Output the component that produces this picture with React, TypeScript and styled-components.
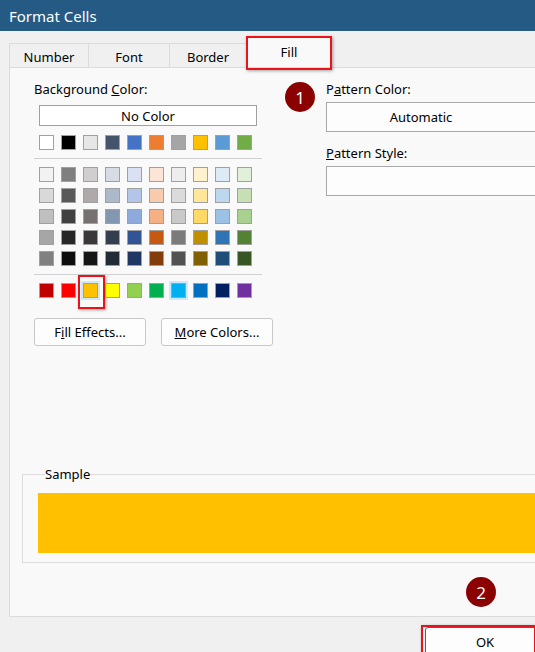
import React from "react";
import styled, { createGlobalStyle } from "styled-components";

const Global = createGlobalStyle`
  html, body { margin: 0; padding: 0; background: #f0f0f0; overflow: hidden; }
  body { font-family: "Segoe UI", "Noto Sans", "Open Sans", sans-serif; font-size: 13px; color: #000; }
`;

const Window = styled.div`width: 535px; height: 652px; position: relative; overflow: hidden; background: #f0f0f0;`;
const TitleBar = styled.div`height: 31px; background: #245a83; color: #fff; font-size: 15px; display: flex; align-items: center; padding-left: 9px;`;
const Tabs = styled.div`display: flex; align-items: flex-end; height: 36px; padding-left: 10px;`;
const Tab = styled.div<{ $w: number; $active?: boolean }>`
  width: ${p => p.$w}px; height: ${p => (p.$active ? 31 : 24)}px; box-sizing: border-box;
  display: flex; align-items: center; justify-content: center; position: relative;
  background: ${p => (p.$active ? "#f9f9f9" : "#f0f0f0")};
  border: 1px solid #dcdcdc; border-bottom: none; margin-left: -1px;
  padding-top: ${p => (p.$active ? 0 : 2)}px;
`;
const RedBox = styled.div<{ $t: number; $l: number; $r: number; $b: number }>`
  position: absolute; top: ${p => p.$t}px; left: ${p => p.$l}px; right: ${p => p.$r}px; bottom: ${p => p.$b}px;
  border: 2px solid #e8141a; box-shadow: 1px 1px 3px rgba(0,0,0,0.35); pointer-events: none;
`;
const Panel = styled.div`
  margin-left: 9px; width: 560px; height: 550px; box-sizing: border-box;
  background: #f9f9f9; border: 1px solid #dcdcdc; display: flex; flex-direction: column;
`;
const Top = styled.div`display: flex; height: 398px;`;
const LeftCol = styled.div`width: 316px; padding: 13px 0 0 24px; box-sizing: border-box;`;
const RightCol = styled.div`padding: 13px 0 0 0; flex: 1;`;
const Label = styled.div`height: 17px; line-height: 17px;`;
const U = styled.span`text-decoration: underline;`;
const NoColor = styled.div`
  margin: 7px 0 0 5px; width: 218px; height: 21px; box-sizing: border-box; border: 1px solid #a0a0a0;
  background: #fff; display: flex; align-items: center; justify-content: center;
`;
const SwatchRow = styled.div<{ $mt: number }>`display: grid; grid-template-columns: repeat(10, 15px); column-gap: 7px; row-gap: 6px; margin: ${p => p.$mt}px 0 0 5px;`;
const Swatch = styled.div<{ $c: string; $glow?: boolean }>`
  width: 15px; height: 15px; box-sizing: border-box; border: 1px solid #a0a0a0; background: ${p => p.$c}; position: relative;
  box-shadow: ${p => (p.$glow ? "0 0 0 2px #cce8ff" : "none")};
`;
const Sep = styled.div<{ $mt: number }>`height: 1px; width: 228px; background: #d0d0d0; margin-top: ${p => p.$mt}px;`;
const BtnRow = styled.div`display: flex; gap: 15px; margin-top: 20px;`;
const Button = styled.div`
  width: 112px; height: 28px; box-sizing: border-box; border: 1px solid #c8c8c8; border-radius: 3px;
  background: #fdfdfd; display: flex; align-items: center; justify-content: center;
`;
const Field = styled.div<{ $h: number }>`
  margin: 4px 0 0; height: ${p => p.$h}px; box-sizing: border-box; border: 1px solid #a8a8a8; background: #fdfdfd;
  display: flex; align-items: center; justify-content: center; width: 240px; padding-right: 50px;
`;
const StyleLabel = styled(Label)`margin-top: 13px;`;
const Sample = styled.fieldset`
  margin: 0 0 0 12px; padding: 10px 0 9px 15px; border: 1px solid #dcdcdc; width: 560px; box-sizing: border-box;
  legend { padding: 0; margin-left: 7px; font-size: 13px; line-height: 17px; }
`;
const SampleFill = styled.div`height: 60px; background: #ffc000;`;
const Badge = styled.div<{ $x: number; $y: number }>`
  position: absolute; left: ${p => p.$x - 15}px; top: ${p => p.$y - 15}px; width: 30px; height: 30px; border-radius: 50%;
  background: #8b0000; color: #fff; font-size: 17px; display: flex; align-items: center; justify-content: center;
`;
const Footer = styled.div`display: flex; justify-content: flex-end; padding-top: 10px;`;
const OkBtn = styled.div`
  width: 120px; height: 30px; box-sizing: border-box; border: 1px solid #0078d7; border-radius: 3px; background: #fdfdfd;
  display: flex; align-items: center; justify-content: center; margin-right: -10px; position: relative;
`;

const theme = ["#ffffff","#000000","#e7e6e6","#44546a","#4472c4","#ed7d31","#a5a5a5","#ffc000","#5b9bd5","#70ad47"];
const tints = [
  ["#f2f2f2","#7f7f7f","#d0cece","#d6dce4","#d9e1f2","#fce4d6","#ededed","#fff2cc","#ddebf7","#e2efda"],
  ["#d9d9d9","#595959","#aeaaaa","#acb9ca","#b4c6e7","#f8cbad","#dbdbdb","#ffe699","#bdd7ee","#c6e0b4"],
  ["#bfbfbf","#404040","#757171","#8497b0","#8ea9db","#f4b084","#c9c9c9","#ffd966","#9bc2e6","#a9d08e"],
  ["#a6a6a6","#262626","#3a3838","#333f4f","#305496","#c65911","#7b7b7b","#bf8f00","#2f75b5","#548235"],
  ["#808080","#0d0d0d","#161616","#222b35","#203764","#833c0c","#525252","#806000","#1f4e78","#375623"],
];
const standard = ["#c00000","#ff0000","#ffc000","#ffff00","#92d050","#00b050","#00b0f0","#0070c0","#002060","#7030a0"];

export default function App() {
  return (
    <Window>
      <Global />
      <TitleBar>Format Cells</TitleBar>
      <Tabs>
        <Tab $w={80}>Number</Tab>
        <Tab $w={82}>Font</Tab>
        <Tab $w={78}>Border</Tab>
        <Tab $w={86} $active>Fill<RedBox $t={-1} $l={-1} $r={-1} $b={-3} /></Tab>
      </Tabs>
      <Panel>
        <Top>
          <LeftCol>
            <Label>Background <U>C</U>olor:</Label>
            <NoColor>No Color</NoColor>
            <SwatchRow $mt={9}>{theme.map(c => <Swatch key={c} $c={c} />)}</SwatchRow>
            <Sep $mt={8} />
            <SwatchRow $mt={8}>{tints.flat().map((c, i) => <Swatch key={i} $c={c} />)}</SwatchRow>
            <Sep $mt={8} />
            <SwatchRow $mt={8}>
              {standard.map((c, i) => (
                <Swatch key={i} $c={c} $glow={i === 2 || i === 6}>
                  {i === 2 && <RedBox $t={-9} $l={-6} $r={-8} $b={-12} />}
                </Swatch>
              ))}
            </SwatchRow>
            <BtnRow>
              <Button>F<U>i</U>ll Effects...</Button>
              <Button><U>M</U>ore Colors...</Button>
            </BtnRow>
          </LeftCol>
          <RightCol>
            <Label>P<U>a</U>ttern Color:</Label>
            <Field $h={30}>Automatic</Field>
            <StyleLabel><U>P</U>attern Style:</StyleLabel>
            <Field $h={30} />
          </RightCol>
        </Top>
        <Sample>
          <legend>Sample</legend>
          <SampleFill />
        </Sample>
      </Panel>
      <Footer>
        <OkBtn>OK<RedBox $t={-3} $l={-5} $r={8} $b={-3} /></OkBtn>
      </Footer>
      <Badge $x={300} $y={97}>1</Badge>
      <Badge $x={481} $y={592}>2</Badge>
    </Window>
  );
}
